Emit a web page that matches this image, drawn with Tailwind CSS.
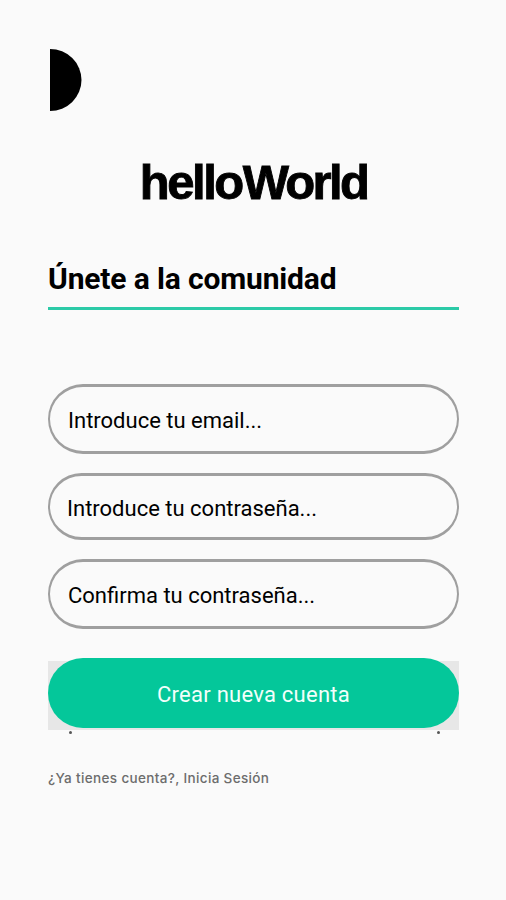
<!DOCTYPE html>
<html lang="es"><head><meta charset="utf-8"><title>helloWorld</title>
<script src="https://cdn.jsdelivr.net/npm/@tailwindcss/browser@4"></script></head>
<body class="bg-[#fafafa] font-[Roboto,sans-serif] text-black">
<main class="flex h-[900px] w-[506px] flex-col overflow-hidden pl-12 pr-[47px] pt-[49px]">
<svg class="ml-[2px] h-[62px] w-[32px]" viewBox="0 0 32 62"><path d="M0 0A31.5 31 0 0 1 0 62Z"/></svg>
<h1 class="mt-[41px] h-[61px] whitespace-nowrap text-center font-['Liberation_Sans',sans-serif] text-[49px] leading-[60px] font-bold tracking-[-2.5px] [-webkit-text-stroke:0.9px_black]">hello<span class="ml-px tracking-[-2.7px]">World</span></h1>
<h2 class="mt-[46px] h-[51px] border-b-[3px] border-[#2bcaa7] text-[30px] leading-[40px] font-bold tracking-[-0.15px] whitespace-nowrap">Únete a la comunidad</h2>
<form class="mt-[74px] flex flex-col text-[22px]">
<label class="flex h-[70px] items-center rounded-full border-x-2 border-y-[3px] border-[#9f9f9f] pt-[2px] pl-[18px]">Introduce tu email...</label>
<label class="mt-[19px] flex h-[67px] items-center rounded-full border-x-2 border-y-[3px] border-[#9f9f9f] pt-[3px] pl-[17px]">Introduce tu contraseña...</label>
<label class="mt-[19px] flex h-[70px] items-center rounded-full border-x-2 border-y-[3px] border-[#9f9f9f] pt-[2px] pl-[18px]">Confirma tu contraseña...</label>
<div class="relative mt-[29px] h-[71px]"><div class="absolute inset-x-0 top-[3px] h-[69px] bg-[#e7e7e7]"></div>
<button type="button" class="relative h-[70px] w-full rounded-full bg-[#04c79a] pt-[2px] tracking-[0.25px] text-[#f2fffb]">Crear nueva cuenta</button>
<span class="absolute top-[73px] left-[21px] size-[3px] rounded-full bg-[#555]"></span>
<span class="absolute top-[73px] left-[389px] size-[3px] rounded-full bg-[#555]"></span></div>
</form>
<p class="mt-[39px] font-[Inter,sans-serif] text-[13.5px] leading-5 font-medium tracking-[0.35px] whitespace-nowrap text-[#6c6c6c]">¿Ya tienes cuenta?, Inicia Sesión</p>
</main></body></html>
